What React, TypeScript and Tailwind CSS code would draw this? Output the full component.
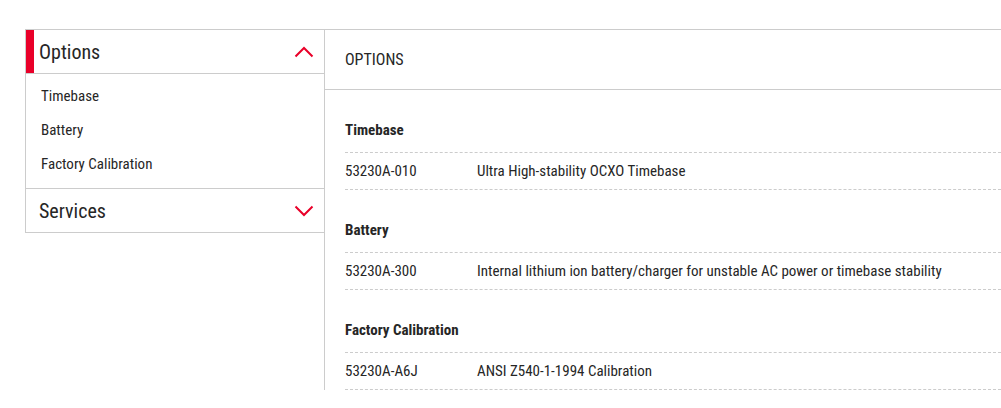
import React from "react";

const font = { fontFamily: '"Liberation Sans Narrow", "Roboto Condensed", Roboto, sans-serif' };

const sections = [
  { title: "Timebase", code: "53230A-010", desc: "Ultra High-stability OCXO Timebase" },
  {
    title: "Battery",
    code: "53230A-300",
    desc: "Internal lithium ion battery/charger for unstable AC power or timebase stability",
  },
  { title: "Factory Calibration", code: "53230A-A6J", desc: "ANSI Z540-1-1994 Calibration" },
];

function Chevron({ up }: { up?: boolean }) {
  return (
    <svg width="20" height="12" viewBox="0 0 20 12" className="text-[#e90029]">
      <path
        d={up ? "M1.5 10.5 L10 2 L18.5 10.5" : "M1.5 1.5 L10 10 L18.5 1.5"}
        fill="none"
        stroke="currentColor"
        strokeWidth="2"
      />
    </svg>
  );
}

export default function App() {
  return (
    <div className="w-[1001px] h-[408px] bg-white text-[#262626] overflow-hidden" style={font}>
      <div className="flex pt-[29px] pl-[25px]">
        <aside className="w-[299px] shrink-0 border-t border-l border-[#cccccc] self-start">
          <div className="flex items-center h-[44px] border-b border-[#cccccc] relative">
            <div className="absolute left-0 top-0 bottom-0 w-[8px] bg-[#e90029]" />
            <span className="pl-[13px] text-[20px] leading-none">Options</span>
            <span className="ml-auto pr-[10px] flex">
              <Chevron up />
            </span>
          </div>
          <ul className="pt-[5px] pb-[7px] text-[15px]">
            {sections.map((s) => (
              <li key={s.title} className="h-[34px] flex items-center pl-[15px]">
                {s.title}
              </li>
            ))}
          </ul>
          <div className="flex items-center h-[45px] border-t border-b border-[#cccccc]">
            <span className="pl-[13px] text-[20px] leading-none">Services</span>
            <span className="ml-auto pr-[10px] flex">
              <Chevron />
            </span>
          </div>
        </aside>
        <main className="flex-1 border-t border-l border-[#cccccc] h-[361px]">
          <div className="h-[60px] flex items-center pl-[20px] border-b border-[#cccccc] text-[16px]">
            OPTIONS
          </div>
          <div className="pl-[20px]">
            {sections.map((s) => (
              <section key={s.title} className="pt-[30px]">
                <h3 className="font-bold text-[15px] leading-[20px] pb-[12px]">{s.title}</h3>
                <div className="flex items-center h-[38px] border-y border-dashed border-[#cccccc] text-[15px]">
                  <span className="w-[132px] shrink-0">{s.code}</span>
                  <span>{s.desc}</span>
                </div>
              </section>
            ))}
          </div>
        </main>
      </div>
    </div>
  );
}
